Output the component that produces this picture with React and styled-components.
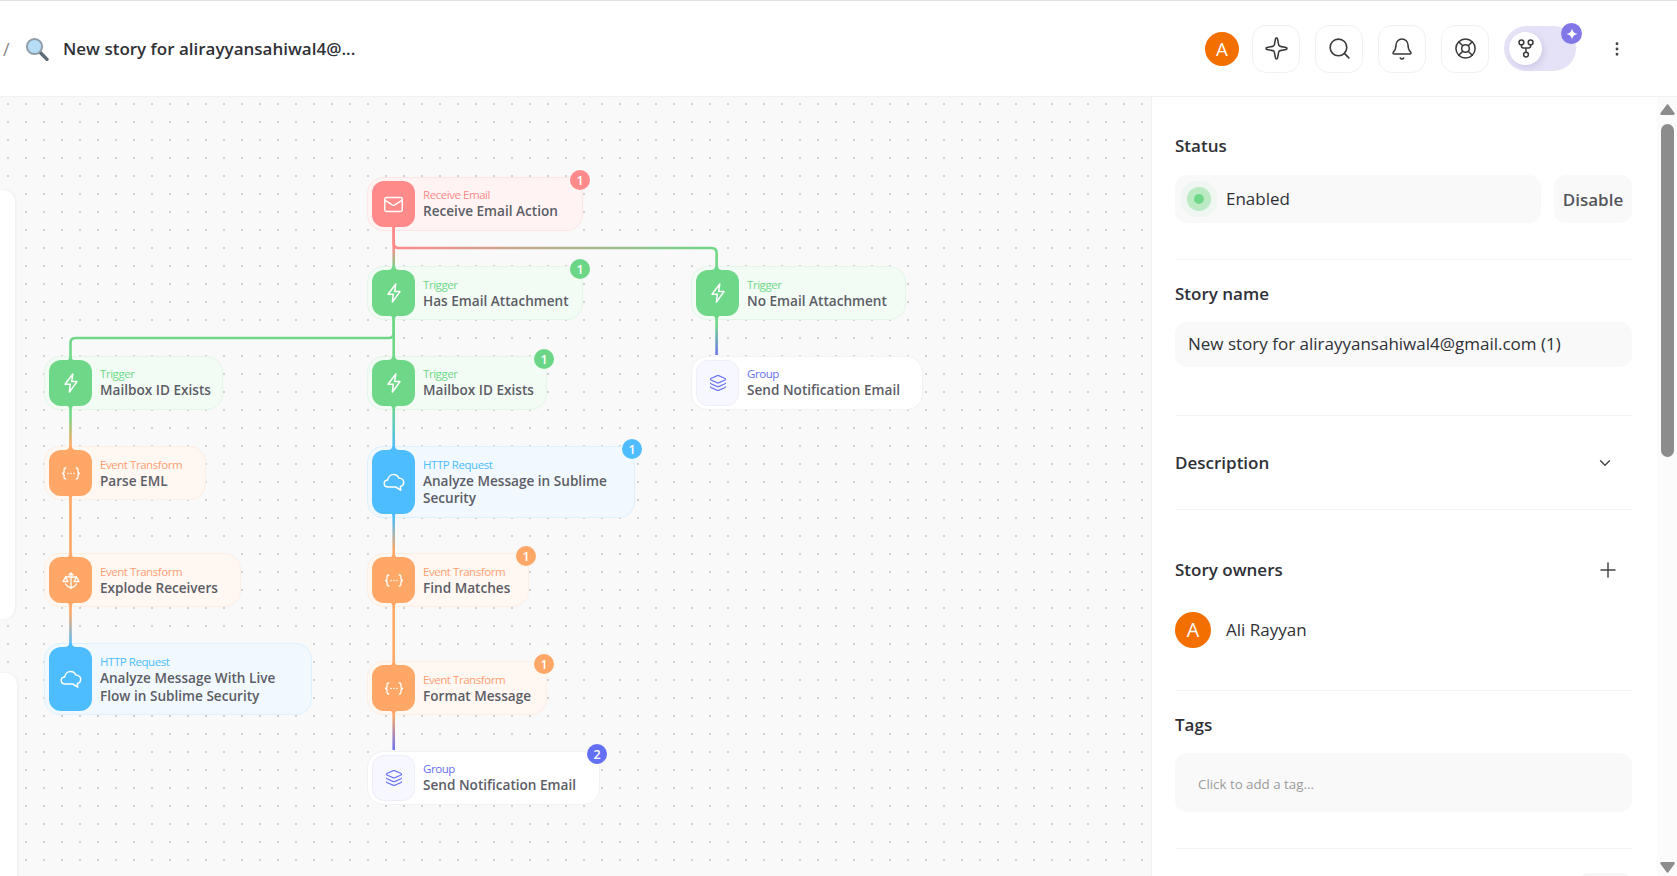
import styled, { createGlobalStyle } from "styled-components";
import {
  Mail,
  Layers,
  Sparkle,
  Search,
  Bell,
  LifeBuoy,
  EllipsisVertical,
  ChevronDown,
  Plus,
} from "lucide-react";

const FONT = `"Open Sans", "Noto Sans", "Liberation Sans", sans-serif`;

const GlobalStyle = createGlobalStyle`
  html, body {
    margin: 0;
    height: 100%;
    overflow: hidden;
    background: #fff;
    font-family: ${FONT};
  }
  * { box-sizing: border-box; }
`;

const KINDS = {
  red: { main: "#ff8a8a", bg: "#fff4f3", line: "#fde6e6", label: "#ff8a8a", badge: "#ff8a8a", glyph: "#fff" },
  green: { main: "#6fd888", bg: "#f2fcf5", line: "#e3f6e8", label: "#6fd888", badge: "#6bd786", glyph: "#fff" },
  orange: { main: "#ffa766", bg: "#fff7f2", line: "#fdeee3", label: "#ffa172", badge: "#ffa766", glyph: "#fff" },
  blue: { main: "#4dbdff", bg: "#f1f9ff", line: "#dcf0fd", label: "#4dbdff", badge: "#4dbdff", glyph: "#fff" },
  group: { main: "#f7f7ff", bg: "#fff", line: "#f2f2f4", label: "#6670f5", badge: "#6470f3", glyph: "#6c75f5" },
};

const Root = styled.div`
  display: flex;
  flex-direction: column;
  height: 100vh;
  border-top: 1px solid #e2e2e2;
  color: #2f3137;
`;

const Header = styled.header`
  display: flex;
  align-items: center;
  flex: none;
  height: 96px;
  padding: 0 51px 0 3px;
  background: #fff;
  border-bottom: 1px solid #f1f1f1;
`;

const Slash = styled.span`
  width: 22px;
  font-size: 18px;
  color: #8a8a8a;
`;

const Title = styled.h1`
  margin: 0 0 1px 14px;
  font-size: 17px;
  font-weight: 600;
  color: #2f3137;
`;

const HeaderActions = styled.div`
  display: flex;
  align-items: center;
  margin-left: auto;
`;

const Avatar = styled.div`
  display: flex;
  align-items: center;
  justify-content: center;
  flex: none;
  width: ${(p) => p.$size}px;
  height: ${(p) => p.$size}px;
  margin-right: ${(p) => p.$gap || 0}px;
  border-radius: 50%;
  background: #f26f00;
  color: #fff;
  font-size: ${(p) => p.$size * 0.55}px;
`;

const IconButton = styled.button`
  display: flex;
  align-items: center;
  justify-content: center;
  width: 48px;
  height: 48px;
  margin-left: 15px;
  padding: 0;
  background: #fff;
  border: 1px solid #f1f1f1;
  border-radius: 14px;
  color: #3a3a3a;
  &:first-of-type { margin-left: 0; }
`;

const Toggle = styled.div`
  position: relative;
  display: flex;
  align-items: center;
  width: 72px;
  height: 45px;
  margin-left: 15px;
  padding-left: 5px;
  border-radius: 23px;
  background: #e5e1f7;
`;

const ToggleKnob = styled.div`
  display: flex;
  align-items: center;
  justify-content: center;
  width: 33px;
  height: 33px;
  border-radius: 50%;
  background: #fff;
  box-shadow: 2px 3px 6px rgba(60, 50, 120, 0.12);
  color: #3a3a3a;
`;

const SparkBadge = styled.div`
  position: absolute;
  top: -3px;
  right: -6px;
  display: flex;
  align-items: center;
  justify-content: center;
  width: 21px;
  height: 21px;
  border-radius: 50%;
  background: #8277e6;
  color: #fff;
`;

const Kebab = styled.div`
  display: flex;
  margin-left: 32px;
  color: #444;
`;

const Main = styled.main`
  display: flex;
  flex: 1;
  min-height: 0;
`;

const Canvas = styled.section`
  position: relative;
  flex: 1;
  overflow: hidden;
  background-color: #f9f9f9;
  background-image: radial-gradient(circle, #d0d0d0 0.7px, transparent 1px);
  background-size: 18px 18px;
  background-position: -1px -2px;
`;

const SidePeek = styled.div`
  position: absolute;
  left: 0;
  top: ${(p) => p.$top}px;
  height: ${(p) => p.$height}px;
  width: ${(p) => p.$width}px;
  background: #fff;
  border-radius: 0 12px 12px 0;
  box-shadow: 1px 0 3px rgba(0, 0, 0, 0.05);
`;

const Links = styled.svg`
  position: absolute;
  left: 0;
  top: 0;
  width: 1151px;
  height: 779px;
  z-index: 2;
  pointer-events: none;
`;

const NodeCard = styled.div`
  position: absolute;
  left: ${(p) => p.$x}px;
  top: ${(p) => p.$y - 97}px;
  width: ${(p) => p.$w}px;
  height: ${(p) => p.$h}px;
  display: flex;
  gap: 8px;
  padding: 3px 3px 3px 4px;
  background: ${(p) => KINDS[p.$kind].bg};
  border: 1px solid ${(p) => KINDS[p.$kind].line};
  border-radius: 16px;
`;

const NodeIcon = styled.div`
  display: flex;
  align-items: center;
  justify-content: center;
  flex: none;
  width: 43px;
  border-radius: 12px;
  background: ${(p) => KINDS[p.$kind].main};
  color: ${(p) => KINDS[p.$kind].glyph};
  ${(p) => p.$kind === "group" && "border: 1px solid #eeeef8;"}
`;

const NodeText = styled.div`
  display: flex;
  flex-direction: column;
  justify-content: center;
  min-width: 0;
  padding-bottom: ${(p) => (p.$lift ? 1 : 0)}px;
`;

const NodeLabel = styled.span`
  font-size: 11.5px;
  line-height: 15px;
  letter-spacing: -0.45px;
  color: ${(p) => KINDS[p.$kind].label};
`;

const NodeName = styled.span`
  font-size: 13.6px;
  line-height: 17.5px;
  font-weight: 600;
  color: #5c5d66;
`;

const Badge = styled.span`
  position: absolute;
  top: -8px;
  right: -8px;
  display: flex;
  align-items: center;
  justify-content: center;
  width: 20px;
  height: 20px;
  border-radius: 50%;
  font-size: 12.5px;
  font-weight: 600;
  background: ${(p) => KINDS[p.$kind].badge};
  color: #fff;
`;

const Panel = styled.aside`
  display: flex;
  flex: none;
  width: 526px;
  background: #fff;
  border-left: 1px solid #f1f1f1;
`;

const PanelBody = styled.div`
  flex: 1;
  min-width: 0;
  padding: 0 25px 0 23px;
  overflow: hidden;
`;

const Section = styled.div`
  padding: ${(p) => p.$top}px 0 ${(p) => p.$bottom}px;
  border-bottom: 1px solid #f3f3f3;
`;

const SectionRow = styled.div`
  display: flex;
  align-items: center;
  justify-content: space-between;
  height: 24px;
`;

const SectionTitle = styled.h2`
  margin: 0;
  font-size: 17px;
  line-height: 24px;
  font-weight: 600;
  color: #2f3137;
`;

const StatusRow = styled.div`
  display: flex;
  gap: 13px;
  margin-top: 17px;
`;

const StatusBox = styled.div`
  display: flex;
  align-items: center;
  flex: 1;
  height: 48px;
  padding: 0 0 1px 5px;
  background: #f9f9f9;
  border-radius: 12px;
  font-size: 17px;
`;

const StatusDot = styled.span`
  display: block;
  width: 10px;
  height: 10px;
  margin: 1px 22px 0 14px;
  border-radius: 50%;
  background: #6fd888;
  box-shadow: 0 0 0 7px #bbeac5, 0 0 0 13px #f0f6f1;
`;

const DisableButton = styled.button`
  width: 78px;
  height: 48px;
  padding: 0;
  border: 0;
  border-radius: 12px;
  background: #f9f9f9;
  font-family: ${FONT};
  font-size: 17px;
  font-weight: 600;
  color: #55565c;
`;

const NameField = styled.div`
  display: flex;
  align-items: center;
  height: 45px;
  margin-top: 16px;
  padding: 0 0 2px 13px;
  background: #f9f9f9;
  border-radius: 12px;
  font-size: 17px;
`;

const ExpandIcon = styled.span`
  display: flex;
  margin-right: ${(p) => p.$right}px;
  color: #444;
`;

const Owner = styled.div`
  display: flex;
  align-items: center;
  gap: 15px;
  margin-top: 30px;
  font-size: 17px;
  line-height: 22px;
`;

const OwnerName = styled.span`
  padding-bottom: 1px;
`;

const TagBox = styled.div`
  display: flex;
  align-items: center;
  height: 59px;
  margin-top: 16px;
  padding: 3px 0 0 23px;
  background: #f9f9f9;
  border-radius: 12px;
  font-size: 13.3px;
  color: #9b9b9b;
`;

const NextCard = styled.div`
  width: 50px;
  height: 20px;
  margin: 24px 2px 0 auto;
  background: #f7f7f7;
  border-radius: 8px;
`;

const Scrollbar = styled.div`
  display: flex;
  flex-direction: column;
  align-items: center;
  flex: none;
  width: 20px;
  padding: 7px 0 3px;
  background: #fbfbfb;
  color: #8c8c8c;
`;

const ScrollThumb = styled.div`
  flex: none;
  width: 13px;
  height: 333px;
  margin: 9px 0 auto;
  border-radius: 7px;
  background: #8c8c8c;
`;

const CX = { left: 70.5, mid: 393.7, right: 716.6 };

const STOPS = {
  red: "#ff8a8a",
  green: "#6fd888",
  orange: "#ffa766",
  blue: "#4dbdff",
  group: "#6a72f6",
};

const ZapGlyph = () => (
  <svg width="16" height="20" viewBox="0 0 16 20" fill="none" stroke="currentColor" strokeWidth="1.5" strokeLinejoin="round">
    <path d="M9.800 1 2 11.200h5.300L6.400 19l7.600-10.400H8.700L9.800 1Z" />
  </svg>
);

const CloudGlyph = () => (
  <svg width="22" height="20" viewBox="0 0 22 20" fill="none" stroke="currentColor" strokeWidth="1.5" strokeLinejoin="round">
    <path d="M5.400 15C3 15 1.200 13.500 1.200 11.500c0-1.800 1.400-3.200 3.400-3.400C5 5 7.500 2.600 10.500 2.600c2.600 0 4.500 1.500 5.200 3.500 2.800.1 5 1.900 5 4.300 0 2-1.400 3.500-3.300 4l.3 3.800-5-3.200H5.400Z" />
  </svg>
);

const BracesGlyph = () => (
  <svg width="20" height="13" viewBox="0 0 20 13" fill="none" stroke="currentColor" strokeWidth="1.3" strokeLinecap="round">
    <path d="M4.800 1C3.400 1 3 1.700 3 2.800v2c0 .9-.6 1.700-2 1.700 1.400 0 2 .8 2 1.700v2c0 1.100.4 1.800 1.800 1.800" />
    <path d="M15.200 1c1.400 0 1.800.7 1.800 1.800v2c0 .9.6 1.700 2 1.700-1.400 0-2 .8-2 1.700v2c0 1.100-.4 1.800-1.800 1.800" />
    <path d="M7 6.500h.01M10 6.500h.01M13 6.500h.01" strokeWidth="1.600" />
  </svg>
);

const ExplodeGlyph = () => (
  <svg width="18" height="17" viewBox="0 0 18 17" fill="none" stroke="currentColor" strokeWidth="1.3" strokeLinecap="round" strokeLinejoin="round">
    <path d="M9 1v15M7 3l2-2 2 2" />
    <path d="M3.500 5h11" />
    <path d="M3.500 5 1 9.500h5L3.500 5ZM14.500 5 12 9.500h5L14.500 5Z" />
    <path d="M3.500 12c1 2 3 3.300 5.500 4 2.500-.7 4.500-2 5.500-4" />
  </svg>
);

const SparkGlyph = () => (
  <svg width="12" height="12" viewBox="0 0 12 12" fill="currentColor">
    <path d="M6 .5c.5 3.200 2 4.800 5.500 5.500C8 6.700 6.500 8.300 6 11.500 5.500 8.300 4 6.700.5 6 4 5.300 5.500 3.700 6 .5Z" />
  </svg>
);

const ForkGlyph = () => (
  <svg width="16" height="19" viewBox="0 0 16 19" fill="none" stroke="currentColor" strokeWidth="1.500">
    <circle cx="3.400" cy="3.400" r="2.400" />
    <circle cx="12.600" cy="3.400" r="2.400" />
    <circle cx="8" cy="15.600" r="2.400" />
    <path d="M3.400 5.800V7c0 1.100.9 2 2 2h5.200c1.100 0 2-.9 2-2V5.800M8 9v4.200" />
  </svg>
);

const GLYPHS = {
  mail: <Mail size={21} strokeWidth={1.6} />,
  zap: <ZapGlyph />,
  braces: <BracesGlyph />,
  explode: <ExplodeGlyph />,
  cloud: <CloudGlyph />,
  layers: <Layers size={18} strokeWidth={1.5} />,
};

const nodes = [
  { x: 367, y: 177, w: 216, h: 54, kind: "red", icon: "mail", label: "Receive Email", name: "Receive Email Action", badge: 1, lift: true },
  { x: 367, y: 266, w: 216, h: 54, kind: "green", icon: "zap", label: "Trigger", name: "Has Email Attachment", badge: 1 },
  { x: 691, y: 266, w: 215, h: 54, kind: "green", icon: "zap", label: "Trigger", name: "No Email Attachment" },
  { x: 44, y: 356, w: 179, h: 54, kind: "green", icon: "zap", label: "Trigger", name: "Mailbox ID Exists", lift: true },
  { x: 367, y: 356, w: 180, h: 54, kind: "green", icon: "zap", label: "Trigger", name: "Mailbox ID Exists", badge: 1, lift: true },
  { x: 691, y: 356, w: 232, h: 54, kind: "group", icon: "layers", label: "Group", name: "Send Notification Email", lift: true },
  { x: 44, y: 446, w: 162, h: 54, kind: "orange", icon: "braces", label: "Event Transform", name: "Parse EML" },
  { x: 367, y: 446, w: 268, h: 72, kind: "blue", icon: "cloud", label: "HTTP Request", name: "Analyze Message in Sublime Security", badge: 1, lift: true },
  { x: 44, y: 553, w: 197, h: 54, kind: "orange", icon: "explode", label: "Event Transform", name: "Explode Receivers" },
  { x: 367, y: 553, w: 162, h: 54, kind: "orange", icon: "braces", label: "Event Transform", name: "Find Matches", badge: 1 },
  { x: 44, y: 643, w: 268, h: 72, kind: "blue", icon: "cloud", label: "HTTP Request", name: "Analyze Message With Live Flow in Sublime Security" },
  { x: 367, y: 661, w: 180, h: 54, kind: "orange", icon: "braces", label: "Event Transform", name: "Format Message", badge: 1 },
  { x: 367, y: 751, w: 233, h: 54, kind: "group", icon: "layers", label: "Group", name: "Send Notification Email", badge: 2, lift: true },
];

// from/to are gradient endpoints, d is the wire in page coordinates
const links = [
  { id: "a", d: `M${CX.mid} 225V270`, x1: 0, y1: 248, x2: 0, y2: 268, from: "red", to: "green" },
  { id: "b", d: `M${CX.mid} 225V243q0 5 5 5H${CX.right - 5}q5 0 5 5V270`, x1: CX.mid, y1: 0, x2: CX.right, y2: 0, from: "red", to: "green" },
  { id: "c", d: `M${CX.mid} 315V360`, x1: 0, y1: 315, x2: 0, y2: 360, from: "green", to: "green" },
  { id: "d", d: `M${CX.mid} 315V333q0 5 -5 5H${CX.left + 5}q-5 0 -5 5V361`, x1: 0, y1: 315, x2: 0, y2: 360, from: "green", to: "green" },
  { id: "e", d: `M${CX.right} 315V355`, x1: 0, y1: 325, x2: 0, y2: 355, from: "green", to: "group" },
  { id: "f", d: `M${CX.mid} 405V450`, x1: 0, y1: 405, x2: 0, y2: 450, from: "green", to: "blue" },
  { id: "g", d: `M${CX.left} 405V450`, x1: 0, y1: 415, x2: 0, y2: 445, from: "green", to: "orange" },
  { id: "h", d: `M${CX.left} 494V558`, x1: 0, y1: 494, x2: 0, y2: 558, from: "orange", to: "orange" },
  { id: "i", d: `M${CX.left} 602V647`, x1: 0, y1: 612, x2: 0, y2: 645, from: "orange", to: "blue" },
  { id: "j", d: `M${CX.mid} 512V558`, x1: 0, y1: 518, x2: 0, y2: 550, from: "blue", to: "orange" },
  { id: "k", d: `M${CX.mid} 602V666`, x1: 0, y1: 602, x2: 0, y2: 666, from: "orange", to: "orange" },
  { id: "l", d: `M${CX.mid} 710V750`, x1: 0, y1: 715, x2: 0, y2: 750, from: "orange", to: "group" },
];

// little fillets where a wire leaves an icon
const flares = [
  [CX.mid, 225, 1, "red"], [CX.mid, 270, -1, "green"], [CX.right, 270, -1, "green"],
  [CX.mid, 315, 1, "green"], [CX.right, 315, 1, "green"], [CX.mid, 360, -1, "green"],
  [CX.left, 361, -1, "green"], [CX.mid, 405, 1, "green"], [CX.left, 405, 1, "green"],
  [CX.left, 450, -1, "orange"], [CX.left, 494, 1, "orange"], [CX.left, 558, -1, "orange"],
  [CX.left, 602, 1, "orange"], [CX.left, 647, -1, "blue"], [CX.mid, 450, -1, "blue"],
  [CX.mid, 512, 1, "blue"], [CX.mid, 558, -1, "orange"], [CX.mid, 602, 1, "orange"],
  [CX.mid, 666, -1, "orange"], [CX.mid, 710, 1, "orange"],
];

const LensGlyph = () => (
  <svg width="24" height="24" viewBox="0 0 24 24">
    <path d="M15 15.200 22 22.400" stroke="#5c6b76" strokeWidth="3.400" strokeLinecap="round" />
    <circle cx="9.500" cy="9.500" r="7.600" fill="#b6dcf6" stroke="#8e9ca7" strokeWidth="2" />
  </svg>
);

const ArrowGlyph = ({ down }) => (
  <svg width="15" height="11" viewBox="0 0 15 11" fill="currentColor">
    <path d={down ? "M1.500 0h12c1 0 1.600 1 1 1.900L8.400 10.200c-.4.6-1.300.6-1.700 0L.5 1.900C0 1 .5 0 1.500 0Z" : "M1.500 11h12c1 0 1.600-1 1-1.900L8.400.8c-.4-.6-1.300-.6-1.700 0L.5 9.100C0 10 .5 11 1.500 11Z"} />
  </svg>
);

const App = () => {
  return (
    <Root>
      <GlobalStyle />
      <Header>
        <Slash>/</Slash>
        <LensGlyph />
        <Title>New story for alirayyansahiwal4@...</Title>
        <HeaderActions>
          <Avatar $size={34} $gap={13}>A</Avatar>
          <IconButton><Sparkle size={25} strokeWidth={1.5} /></IconButton>
          <IconButton><Search size={25} strokeWidth={1.5} /></IconButton>
          <IconButton><Bell size={24} strokeWidth={1.5} /></IconButton>
          <IconButton><LifeBuoy size={23} strokeWidth={1.6} /></IconButton>
          <Toggle>
            <ToggleKnob><ForkGlyph /></ToggleKnob>
            <SparkBadge><SparkGlyph /></SparkBadge>
          </Toggle>
          <Kebab><EllipsisVertical size={18} strokeWidth={1.8} /></Kebab>
        </HeaderActions>
      </Header>
      <Main>
        <Canvas>
          <SidePeek $top={93} $height={429} $width={15} />
          <SidePeek $top={576} $height={240} $width={17} />
          {nodes.map((n) => (
            <NodeCard key={`${n.x}-${n.y}`} $x={n.x} $y={n.y} $w={n.w} $h={n.h} $kind={n.kind}>
              <NodeIcon $kind={n.kind}>{GLYPHS[n.icon]}</NodeIcon>
              <NodeText $lift={n.lift}>
                <NodeLabel $kind={n.kind}>{n.label}</NodeLabel>
                <NodeName>{n.name}</NodeName>
              </NodeText>
              {n.badge && <Badge $kind={n.kind}>{n.badge}</Badge>}
            </NodeCard>
          ))}
          <Links viewBox="0 97 1151 779" fill="none">
            <defs>
              {links.map((l) => (
                <linearGradient key={l.id} id={`wire-${l.id}`} gradientUnits="userSpaceOnUse" x1={l.x1} y1={l.y1} x2={l.x2} y2={l.y2}>
                  <stop offset="0" stopColor={STOPS[l.from]} />
                  <stop offset="1" stopColor={STOPS[l.to]} />
                </linearGradient>
              ))}
            </defs>
            {links.map((l) => (
              <path key={l.id} d={l.d} stroke={`url(#wire-${l.id})`} strokeWidth="2.600" />
            ))}
            {flares.map(([x, y, dir, kind]) => (
              <path
                key={`${x}-${y}`}
                d={`M${x - 6} ${y}Q${x - 2} ${y} ${x - 1.300} ${y + dir * 3.500}H${x + 1.300}Q${x + 2} ${y} ${x + 6} ${y}Z`}
                fill={STOPS[kind]}
              />
            ))}
          </Links>
        </Canvas>
        <Panel>
          <PanelBody>
            <Section $top={37} $bottom={36}>
              <SectionTitle>Status</SectionTitle>
              <StatusRow>
                <StatusBox><StatusDot />Enabled</StatusBox>
                <DisableButton>Disable</DisableButton>
              </StatusRow>
            </Section>
            <Section $top={22} $bottom={48}>
              <SectionTitle>Story name</SectionTitle>
              <NameField>New story for alirayyansahiwal4@gmail.com (1)</NameField>
            </Section>
            <Section $top={35} $bottom={34}>
              <SectionRow>
                <SectionTitle>Description</SectionTitle>
                <ExpandIcon $right={18}><ChevronDown size={18} strokeWidth={1.8} /></ExpandIcon>
              </SectionRow>
            </Section>
            <Section $top={48} $bottom={42}>
              <SectionRow>
                <SectionTitle>Story owners</SectionTitle>
                <ExpandIcon $right={12}><Plus size={24} strokeWidth={1.5} /></ExpandIcon>
              </SectionRow>
              <Owner>
                <Avatar $size={36}>A</Avatar>
                <OwnerName>Ali Rayyan</OwnerName>
              </Owner>
            </Section>
            <Section $top={22} $bottom={36}>
              <SectionTitle>Tags</SectionTitle>
              <TagBox>Click to add a tag...</TagBox>
            </Section>
            <NextCard />
          </PanelBody>
          <Scrollbar>
            <ArrowGlyph />
            <ScrollThumb />
            <ArrowGlyph down />
          </Scrollbar>
        </Panel>
      </Main>
    </Root>
  );
};

export default App;
